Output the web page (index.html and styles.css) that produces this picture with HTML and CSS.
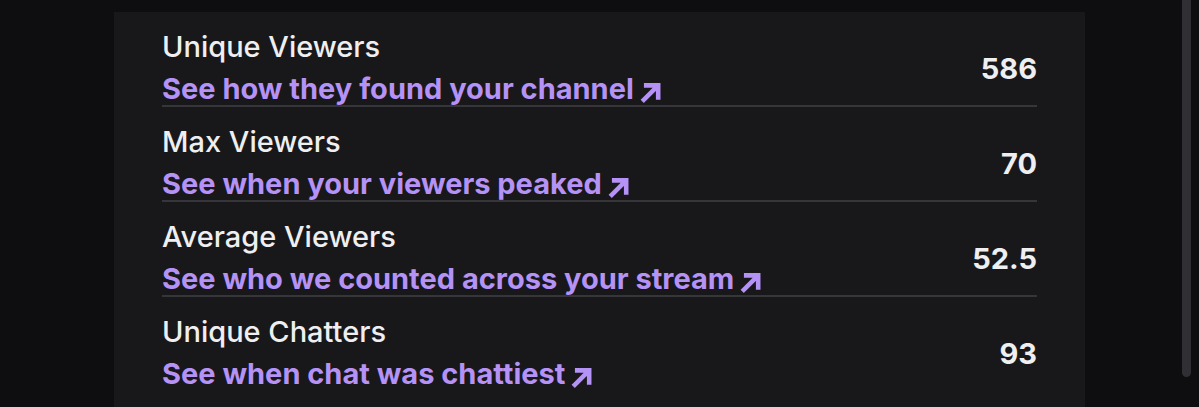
FILE: index.html
```html
<!DOCTYPE html>
<html lang="en">
<head>
<meta charset="utf-8">
<title>Stream stats</title>
<link rel="stylesheet" href="styles.css">
</head>
<body>
<main class="page">
  <section class="card">
    <div class="row">
      <div class="info">
        <div class="title">Unique Viewers</div>
        <a class="link" href="#">See how they found your channel<svg class="arrow" viewBox="0 0 20 20" aria-hidden="true"><path d="M4 16.5 L15 5.5 M6 4.5 H16 V14.5"/></svg></a>
      </div>
      <div class="value">586</div>
    </div>
    <div class="row">
      <div class="info">
        <div class="title">Max Viewers</div>
        <a class="link" href="#">See when your viewers peaked<svg class="arrow" viewBox="0 0 20 20" aria-hidden="true"><path d="M4 16.5 L15 5.5 M6 4.5 H16 V14.5"/></svg></a>
      </div>
      <div class="value">70</div>
    </div>
    <div class="row">
      <div class="info">
        <div class="title">Average Viewers</div>
        <a class="link" href="#">See who we counted across your stream<svg class="arrow" viewBox="0 0 20 20" aria-hidden="true"><path d="M4 16.5 L15 5.5 M6 4.5 H16 V14.5"/></svg></a>
      </div>
      <div class="value">52.5</div>
    </div>
    <div class="row">
      <div class="info">
        <div class="title">Unique Chatters</div>
        <a class="link" href="#">See when chat was chattiest<svg class="arrow" viewBox="0 0 20 20" aria-hidden="true"><path d="M4 16.5 L15 5.5 M6 4.5 H16 V14.5"/></svg></a>
      </div>
      <div class="value">93</div>
    </div>
  </section>
  <div class="scrollbar"></div>
</main>
</body>
</html>
```
FILE: styles.css
```css
html, body {
  margin: 0;
  padding: 0;
  background: #0e0e10;
  height: 100%;
  overflow: hidden;
}

.page {
  position: relative;
  height: 100%;
  padding: 12px 0 0 114px;
  box-sizing: border-box;
  font-family: Inter, "Noto Sans", sans-serif;
}

.card {
  width: 971px;
  background: #18181b;
  padding: 0 48px;
  box-sizing: border-box;
  min-height: 420px;
}

.row {
  display: flex;
  align-items: center;
  justify-content: space-between;
  padding-top: 19px;
  border-bottom: 2px solid #35353a;
}

.row:last-child {
  border-bottom: none;
}

.info {
  display: flex;
  flex-direction: column;
}

.title {
  color: #efeff1;
  font-size: 29px;
  font-weight: 500;
  line-height: 32px;
  margin-bottom: 10px;
}

.link {
  color: #b592f5;
  font-size: 29px;
  font-weight: 700;
  line-height: 32px;
  text-decoration: none;
  display: inline-flex;
  align-items: center;
  white-space: nowrap;
}

.arrow {
  width: 24px;
  height: 24px;
  margin-left: 5px;
  margin-top: 5px;
  fill: none;
  stroke: #b592f5;
  stroke-width: 3.8;
  stroke-linecap: square;
  stroke-linejoin: miter;
}

.value {
  color: #efeff1;
  font-size: 29px;
  font-weight: 700;
}

.scrollbar {
  position: absolute;
  top: 0;
  left: 1182px;
  width: 9px;
  height: 377px;
  background: #303034;
  border-radius: 0 0 5px 5px;
}
```
